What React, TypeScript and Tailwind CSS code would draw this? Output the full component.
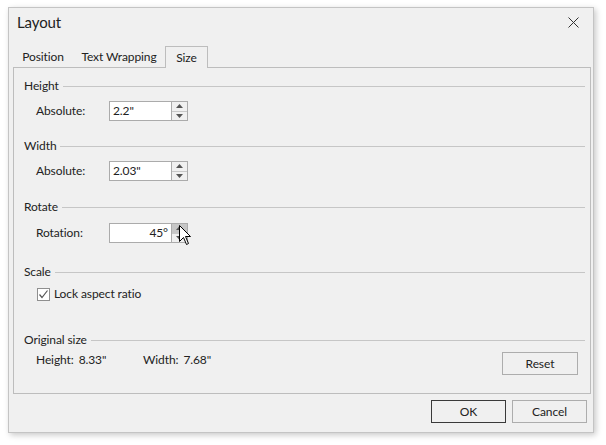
import React from "react";

const font = { fontFamily: 'Lato, "Noto Sans", "Liberation Sans", sans-serif' };

function Spinner({ hover }: { hover?: boolean }) {
  return (
    <div className="w-[16px] h-full border-l border-[#ababab] flex flex-col bg-[#f0f0f0]">
      <div className={`flex-1 flex items-center justify-center ${hover ? "bg-[#c6c6c6]" : ""}`}>
        <svg width="7" height="4" viewBox="0 0 7 4">
          <path d="M0 4 L3.5 0 L7 4 Z" fill="#555" />
        </svg>
      </div>
      <div className="h-px bg-[#c8c8c8]" />
      <div className="flex-1 flex items-center justify-center">
        <svg width="7" height="4" viewBox="0 0 7 4">
          <path d="M0 0 L7 0 L3.5 4 Z" fill="#555" />
        </svg>
      </div>
    </div>
  );
}

function SpinInput({ value, right, hover }: { value: string; right?: boolean; hover?: boolean }) {
  return (
    <div className="relative w-[79px] h-[20px] border border-[#ababab] bg-white flex">
      <div className={`flex-1 flex items-center text-[12px] text-[#222] ${right ? "justify-end pr-[3px]" : "pl-[3px]"}`}>
        {value}
      </div>
      <Spinner hover={hover} />
      {hover && (
        <svg className="absolute left-[69px] top-[1px]" width="13" height="21" viewBox="0 0 13 21">
          <path
            d="M0.5 0.5 L0.5 16.5 L4.5 12.5 L7.5 19.5 L9.5 18.5 L6.5 11.5 L11.5 11.5 Z"
            fill="#fff"
            stroke="#000"
            strokeWidth="1"
            strokeLinejoin="miter"
          />
        </svg>
      )}
    </div>
  );
}

function GroupHeader({ title, className }: { title: string; className?: string }) {
  return (
    <div className={`flex items-center h-[16px] ${className ?? ""}`}>
      <span className="text-[12px] text-[#222] leading-[16px]">{title}</span>
      <div className="flex-1 h-px bg-[#c6c6c6] ml-[4px]" />
    </div>
  );
}

function LabeledRow({ label, children, className }: { label: string; children: React.ReactNode; className?: string }) {
  return (
    <div className={`flex items-center h-[20px] pl-[12px] ${className ?? ""}`}>
      <span className="w-[73px] text-[12px] text-[#222]">{label}</span>
      {children}
    </div>
  );
}

export default function App() {
  return (
    <div className="w-[606px] h-[445px] bg-white pt-[7px] pl-[8px] tracking-[-0.1px]" style={font}>
      <div className="w-[586px] h-[426px] bg-[#f0f0f0] border border-[#c4c4c4] shadow-[2px_2px_6px_rgba(0,0,0,0.22)] flex flex-col">
        <div className="h-[28px] flex items-center justify-between pl-[8px] pr-[14px]">
          <span className="text-[15px] text-[#222]">Layout</span>
          <svg width="11" height="11" viewBox="0 0 11 11">
            <path d="M0.5 0.5 L10.5 10.5 M10.5 0.5 L0.5 10.5" stroke="#333" strokeWidth="1" />
          </svg>
        </div>
        <div className="mt-[10px] pl-[4px] h-[21px] flex items-start text-[12px] text-[#222]">
          <div className="w-[60px] h-[21px] flex items-center justify-center pt-px">Position</div>
          <div className="w-[92px] h-[21px] flex items-center justify-center pt-px">Text Wrapping</div>
          <div className="w-[43px] h-[22px] flex items-center justify-center border border-b-0 border-[#bdbdbd] bg-[#f0f0f0] relative z-10">
            Size
          </div>
        </div>
        <div className="ml-[4px] w-[578px] h-[327px] border border-[#bdbdbd] pl-[10px] pr-[5px] pt-[10px] flex flex-col">
          <GroupHeader title="Height" />
          <LabeledRow label="Absolute:" className="mt-[7px]">
            <SpinInput value={'2.2"'} />
          </LabeledRow>
          <GroupHeader title="Width" className="mt-[17px]" />
          <LabeledRow label="Absolute:" className="mt-[7px]">
            <SpinInput value={'2.03"'} />
          </LabeledRow>
          <GroupHeader title="Rotate" className="mt-[18px]" />
          <LabeledRow label="Rotation:" className="mt-[8px]">
            <SpinInput value="45°" right hover />
          </LabeledRow>
          <GroupHeader title="Scale" className="mt-[21px]" />
          <div className="mt-[6px] h-[16px] flex items-center pl-[13px]">
            <div className="w-[13px] h-[13px] border border-[#8f8f8f] bg-white flex items-center justify-center">
              <svg width="11" height="11" viewBox="0 0 11 11">
                <path d="M1.5 5.5 L4 8.5 L9.5 1.5" stroke="#555" strokeWidth="1.2" fill="none" />
              </svg>
            </div>
            <span className="ml-[4px] text-[12px] text-[#222]">Lock aspect ratio</span>
          </div>
          <GroupHeader title="Original size" className="mt-[30px]" />
          <div className="mt-[3px] flex items-start pl-[12px] pr-[7px]">
            <div className="w-[107px] h-[18px] flex items-center text-[12px] text-[#222]">
              <span>Height:</span>
              <span className="ml-[5px]">8.33"</span>
            </div>
            <div className="h-[18px] flex items-center text-[12px] text-[#222]">
              <span>Width:</span>
              <span className="ml-[5px]">7.68"</span>
            </div>
            <div className="flex-1" />
            <button className="mt-[1px] w-[76px] h-[23px] border border-[#adadad] bg-[#f0f0f0] text-[12px] text-[#222]">
              Reset
            </button>
          </div>
        </div>
        <div className="mt-[6px] flex justify-end gap-[6px] pr-[6px]">
          <button className="w-[75px] h-[23px] border border-[#3a3a3a] bg-[#f0f0f0] text-[12px] text-[#222]">OK</button>
          <button className="w-[75px] h-[23px] border border-[#adadad] bg-[#f0f0f0] text-[12px] text-[#222]">Cancel</button>
        </div>
      </div>
    </div>
  );
}
